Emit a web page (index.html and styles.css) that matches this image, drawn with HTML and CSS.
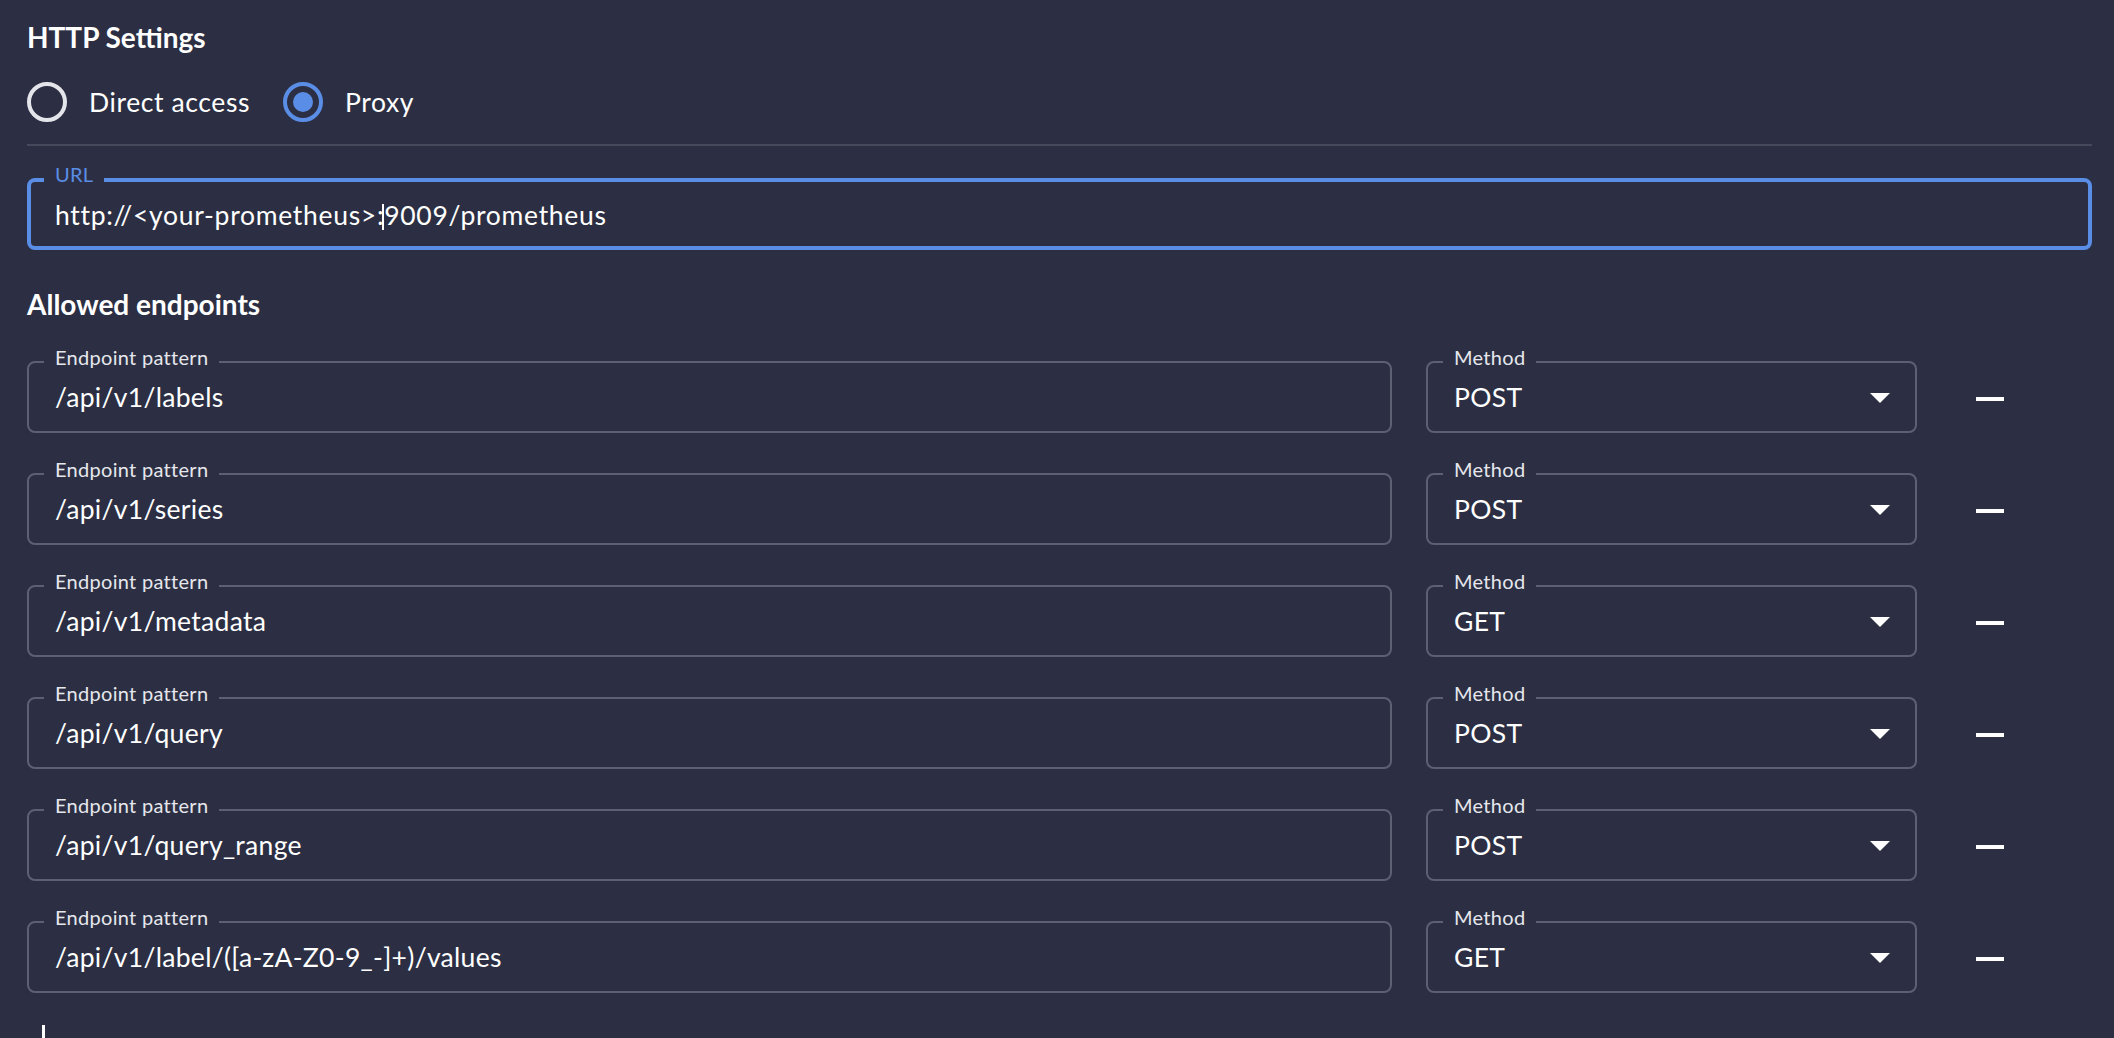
FILE: index.html
```html
<!DOCTYPE html>
<html lang="en">
<head>
<meta charset="utf-8">
<title>HTTP Settings</title>
<link rel="stylesheet" href="styles.css">
</head>
<body>
<main class="page">
  <h2 class="section-title">HTTP Settings</h2>
  <div class="radio-group">
    <label class="radio">
      <svg class="radio-icon" width="40" height="40" viewBox="0 0 40 40"><circle cx="20" cy="20" r="18" fill="none" stroke="#e4e5ea" stroke-width="4"/></svg>
      <span class="radio-text">Direct access</span>
    </label>
    <label class="radio">
      <svg class="radio-icon" width="40" height="40" viewBox="0 0 40 40"><circle cx="20" cy="20" r="18" fill="none" stroke="#5a8de6" stroke-width="4"/><circle cx="20" cy="20" r="10" fill="#5a8de6"/></svg>
      <span class="radio-text">Proxy</span>
    </label>
  </div>
  <hr class="divider">

  <div class="field field-focused">
    <span class="field-label label-focused">URL</span>
    <div class="field-value">http://&lt;your-prometheus&gt;:<span class="caret"></span>9009/prometheus</div>
  </div>

  <h2 class="section-title endpoints-title">Allowed endpoints</h2>

  <div class="endpoint-list">
    <div class="endpoint-row">
      <div class="field"><span class="field-label">Endpoint pattern</span><div class="field-value">/api/v1/labels</div></div>
      <div class="field select"><span class="field-label">Method</span><div class="field-value">POST</div><span class="arrow"></span></div>
      <button class="remove" type="button"><span class="minus"></span></button>
    </div>
    <div class="endpoint-row">
      <div class="field"><span class="field-label">Endpoint pattern</span><div class="field-value">/api/v1/series</div></div>
      <div class="field select"><span class="field-label">Method</span><div class="field-value">POST</div><span class="arrow"></span></div>
      <button class="remove" type="button"><span class="minus"></span></button>
    </div>
    <div class="endpoint-row">
      <div class="field"><span class="field-label">Endpoint pattern</span><div class="field-value">/api/v1/metadata</div></div>
      <div class="field select"><span class="field-label">Method</span><div class="field-value">GET</div><span class="arrow"></span></div>
      <button class="remove" type="button"><span class="minus"></span></button>
    </div>
    <div class="endpoint-row">
      <div class="field"><span class="field-label">Endpoint pattern</span><div class="field-value">/api/v1/query</div></div>
      <div class="field select"><span class="field-label">Method</span><div class="field-value">POST</div><span class="arrow"></span></div>
      <button class="remove" type="button"><span class="minus"></span></button>
    </div>
    <div class="endpoint-row">
      <div class="field"><span class="field-label">Endpoint pattern</span><div class="field-value">/api/v1/query_range</div></div>
      <div class="field select"><span class="field-label">Method</span><div class="field-value">POST</div><span class="arrow"></span></div>
      <button class="remove" type="button"><span class="minus"></span></button>
    </div>
    <div class="endpoint-row">
      <div class="field"><span class="field-label">Endpoint pattern</span><div class="field-value">/api/v1/label/([a-zA-Z0-9_-]+)/values</div></div>
      <div class="field select"><span class="field-label">Method</span><div class="field-value">GET</div><span class="arrow"></span></div>
      <button class="remove" type="button"><span class="minus"></span></button>
    </div>
  </div>

  <div class="add-stub"></div>
</main>
</body>
</html>
```

FILE: styles.css
```css
html, body {
  margin: 0;
  padding: 0;
  overflow: hidden;
  background: #2c2f43;
}

body {
  font-family: Lato, "Open Sans", "Liberation Sans", sans-serif;
  color: #ffffff;
}

.page {
  padding: 20px 22px 0 27px;
}

.section-title {
  margin: 0;
  font-size: 28px;
  line-height: 34px;
  font-weight: 700;
  color: #ffffff;
}

.radio-group {
  display: flex;
  align-items: center;
  margin-top: 28px;
  height: 40px;
}

.radio {
  display: flex;
  align-items: center;
  gap: 22px;
  margin-right: 33px;
}

.radio-icon {
  display: block;
  flex: none;
}

.radio-text {
  font-size: 26.5px;
  letter-spacing: 0.6px;
  line-height: 40px;
  color: #ffffff;
}

.divider {
  margin: 22px 0 0 0;
  border: 0;
  height: 2px;
  background: #46495b;
}

.field {
  position: relative;
  box-sizing: border-box;
  height: 72px;
  border: 2px solid #5d6072;
  border-radius: 8px;
  padding: 0 26px;
}

.field-focused {
  margin-top: 32px;
  border: 4px solid #5a8de6;
  padding: 0 24px;
}

.field-label {
  position: absolute;
  left: 15px;
  top: -18px;
  padding: 0 11px;
  font-size: 20px;
  letter-spacing: 0.3px;
  line-height: 24px;
  color: #e6e7ec;
  background: #2c2f43;
}

.label-focused {
  left: 13px;
  top: -20px;
  color: #5a8de6;
}

.field-value {
  font-size: 26.5px;
  letter-spacing: 0.3px;
  line-height: 68px;
  white-space: nowrap;
  color: #ffffff;
}

.field-focused .field-value {
  line-height: 66px;
  letter-spacing: 0.7px;
}

.caret {
  display: inline-block;
  width: 2px;
  height: 26px;
  margin-left: -2px;
  vertical-align: -5px;
  background: #ffffff;
}

.endpoints-title {
  margin-top: 37px;
}

.endpoint-list {
  display: flex;
  flex-direction: column;
  gap: 40px;
  margin-top: 40px;
  padding-right: 63px;
}

.endpoint-row {
  display: grid;
  grid-template-columns: 1fr 491px 78px;
  column-gap: 34px;
  align-items: center;
}

.select {
  display: flex;
  align-items: center;
  justify-content: space-between;
  padding-right: 25px;
}

.arrow {
  width: 0;
  height: 0;
  margin-top: 2px;
  border-left: 10px solid transparent;
  border-right: 10px solid transparent;
  border-top: 10px solid #ffffff;
}

.remove {
  display: flex;
  align-items: center;
  justify-content: center;
  height: 72px;
  padding: 0;
  border: 0;
  background: transparent;
  cursor: pointer;
}

.minus {
  display: block;
  width: 28px;
  height: 4px;
  margin-top: 4px;
  background: #ffffff;
}

.add-stub {
  width: 3px;
  height: 24px;
  margin: 32px 0 0 15px;
  background: #ffffff;
}
```
